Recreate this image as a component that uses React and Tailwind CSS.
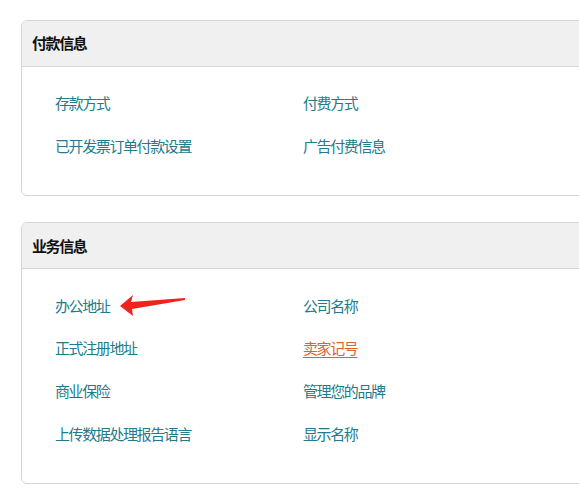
const font = { fontFamily: '"Microsoft YaHei", "Noto Sans CJK SC", sans-serif' }

function Arrow() {
  return (
    <svg className="absolute left-[64px] top-[-5px]" width="70" height="26" viewBox="0 0 70 26">
      <path d="M1 15 L14 4 L12 11 L66 7 L66 9 L13 18 L14 25 Z" fill="#f2231b" />
    </svg>
  )
}

function Card({ title, rows, className }) {
  return (
    <div className={`ml-[21px] w-[600px] border border-[#d5d5d5] rounded-[6px] overflow-hidden ${className}`}>
      <div className="h-[46px] bg-[#f0f0f0] border-b border-[#d5d5d5] flex items-center pl-[10px] text-[15px] tracking-[-1.4px] font-bold text-[#111]">
        {title}
      </div>
      <div className="pt-[15px] pb-[28px] pl-[33px]">
        {rows.map((row, i) => (
          <div key={i} className="flex h-[42.7px] items-center text-[15px] tracking-[-1.4px] leading-[20px]">
            {row.map((cell, j) => (
              <div key={j} className="w-[248px] relative">
                <span
                  className={cell.orange ? 'text-[#e2602d] underline underline-offset-[3px]' : 'text-[#227b8a]'}
                >
                  {cell.text}
                </span>
                {cell.arrow && <Arrow />}
              </div>
            ))}
          </div>
        ))}
      </div>
    </div>
  )
}

export default function App() {
  return (
    <div className="w-[579px] h-[501px] bg-white overflow-hidden pt-[20px]" style={font}>
      <Card
        title="付款信息"
        rows={[
          [{ text: '存款方式' }, { text: '付费方式' }],
          [{ text: '已开发票订单付款设置' }, { text: '广告付费信息' }],
        ]}
      />
      <Card
        className="mt-[26px]"
        title="业务信息"
        rows={[
          [{ text: '办公地址', arrow: true }, { text: '公司名称' }],
          [{ text: '正式注册地址' }, { text: '卖家记号', orange: true }],
          [{ text: '商业保险' }, { text: '管理您的品牌' }],
          [{ text: '上传数据处理报告语言' }, { text: '显示名称' }],
        ]}
      />
    </div>
  )
}
